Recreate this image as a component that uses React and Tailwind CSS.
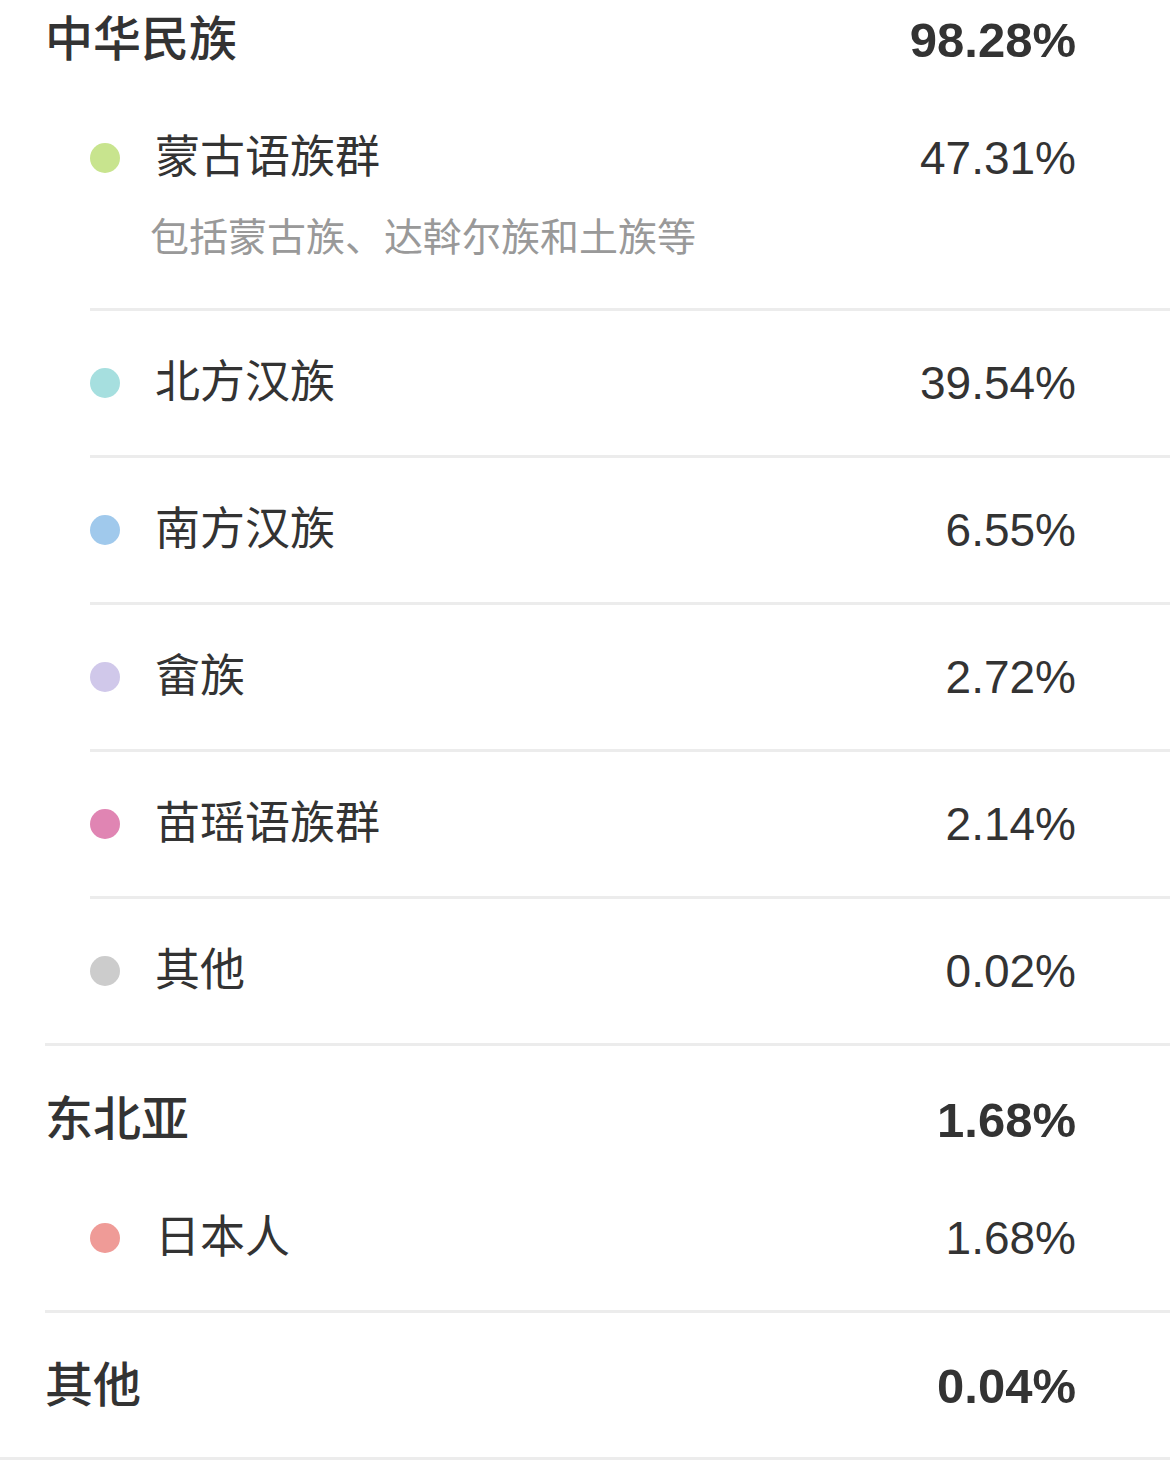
const groups = [
  {
    name: '中华民族',
    value: '98.28%',
    pt: 'pt-[10px]',
    items: [
      { name: '蒙古语族群', value: '47.31%', dot: 'bg-[#c8e48e]', note: '包括蒙古族、达斡尔族和土族等' },
      { name: '北方汉族', value: '39.54%', dot: 'bg-[#a6dfdf]' },
      { name: '南方汉族', value: '6.55%', dot: 'bg-[#a0c9ec]' },
      { name: '畲族', value: '2.72%', dot: 'bg-[#d0c8ea]' },
      { name: '苗瑶语族群', value: '2.14%', dot: 'bg-[#e085b3]' },
      { name: '其他', value: '0.02%', dot: 'bg-[#cccccc]' },
    ],
  },
  {
    name: '东北亚',
    value: '1.68%',
    pt: 'pt-[44px]',
    items: [{ name: '日本人', value: '1.68%', dot: 'bg-[#ef9b97]' }],
  },
  { name: '其他', value: '0.04%', pt: 'pt-[43px]', items: [], last: true },
];

const SubRow = ({ item, first, divider }) => {
  if (first) {
    return (
      <div className={`pt-[58px] pr-[94px] ${item.note ? 'pb-[45px]' : 'pb-[42px]'} ${divider ? 'border-b-[3px] border-[#ececec]' : ''}`}>
        <div className="flex items-center h-[60px]">
          <span className={`w-[30px] h-[30px] rounded-full ${item.dot}`}></span>
          <span className="ml-[35px] text-[45px] leading-[60px]">{item.name}</span>
          <span className="ml-auto text-[46px] leading-[60px]">{item.value}</span>
        </div>
        {item.note && (
          <p className="ml-[60px] mt-[25px] text-[39px] leading-[50px] text-[#999999]">{item.note}</p>
        )}
      </div>
    );
  }
  return (
    <div className={`h-[144px] box-content flex items-center pr-[94px] ${divider ? 'border-b-[3px] border-[#ececec]' : ''}`}>
      <span className={`w-[30px] h-[30px] rounded-full ${item.dot}`}></span>
      <span className="ml-[35px] text-[45px] leading-[60px]">{item.name}</span>
      <span className="ml-auto text-[46px] leading-[60px]">{item.value}</span>
    </div>
  );
};

export default function App() {
  return (
    <div className="w-full min-h-[1472px] bg-white text-[#333333] font-['Liberation_Sans','Noto_Sans_CJK_SC',sans-serif]">
      {groups.map((g) => (
        <div
          key={g.name + g.value}
          className={`border-b-[3px] border-[#ececec] ${g.last ? 'pb-[41px]' : 'ml-[45px]'}`}
        >
          <div className={`flex items-center ${g.pt} pr-[94px] ${g.last ? 'pl-[45px]' : ''}`}>
            <span className="text-[48px] leading-[60px] font-medium">{g.name}</span>
            <span className="ml-auto text-[49px] leading-[60px] font-semibold">{g.value}</span>
          </div>
          {g.items.length > 0 && (
            <div className="ml-[45px]">
              {g.items.map((item, i) => (
                <SubRow key={item.name} item={item} first={i === 0} divider={i < g.items.length - 1} />
              ))}
            </div>
          )}
        </div>
      ))}
    </div>
  );
}
